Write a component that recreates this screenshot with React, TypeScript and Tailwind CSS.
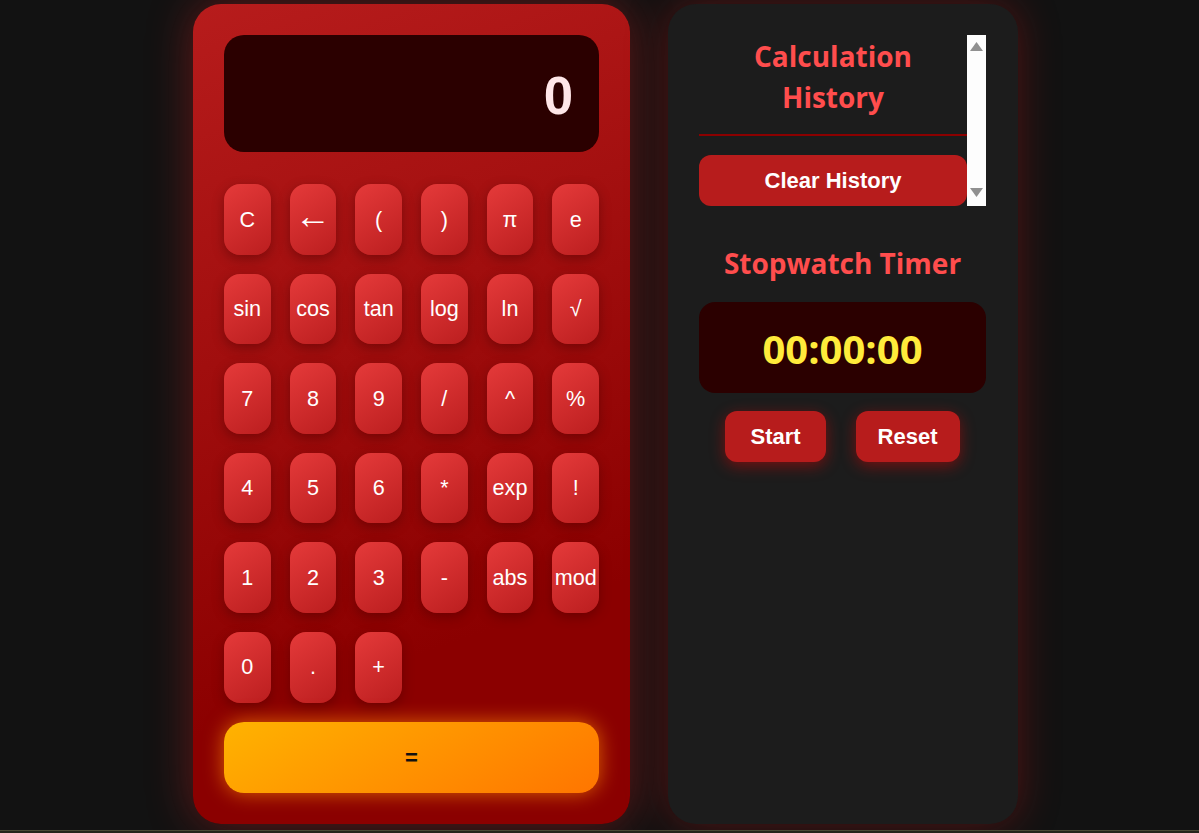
const keys = [
  "C", "←", "(", ")", "π", "e",
  "sin", "cos", "tan", "log", "ln", "√",
  "7", "8", "9", "/", "^", "%",
  "4", "5", "6", "*", "exp", "!",
  "1", "2", "3", "-", "abs", "mod",
  "0", ".", "+",
];

const sans = "font-['Liberation_Sans',Arial,sans-serif]";
const heading = "font-['Open_Sans','Noto_Sans',sans-serif]";

function ScrollBar() {
  return (
    <div className="w-[19px] bg-[#fdfdfd] flex flex-col justify-between items-center pt-[7px] pb-[9px]">
      <svg width="13" height="9" viewBox="0 0 13 9">
        <path d="M6.5 0 L13 9 L0 9 Z" fill="#909090" />
      </svg>
      <svg width="13" height="9" viewBox="0 0 13 9">
        <path d="M0 0 L13 0 L6.5 9 Z" fill="#909090" />
      </svg>
    </div>
  );
}

function Calculator() {
  return (
    <div className="w-[437px] h-[820px] rounded-[28px] p-[31px] flex flex-col bg-[linear-gradient(160deg,#b71c1c,#8b0000_75%)] shadow-[0_0_45px_rgba(200,30,30,0.45)]">
      {/* Display */}
      <div className="h-[117px] rounded-[20px] bg-[#2b0000] flex items-center justify-end pr-[26px] pt-[6px]">
        <span className={`${sans} text-[52.8px] font-bold text-[#ffe6e8] leading-none`}>0</span>
      </div>

      {/* Keys */}
      <div className="grid grid-cols-6 gap-[19px] mt-[32px]">
        {keys.map((k, index) => (
          <button
            key={index}
            className={`${sans} ${k === "←" ? "text-[36px] pb-[7px]" : "text-[21.6px]"} h-[70.6px] rounded-[16px] text-white bg-[linear-gradient(145deg,#e53a3a,#bb1e1f)] shadow-[0_4px_12px_rgba(60,0,0,0.4)] flex items-center justify-center leading-none`}
          >
            {k}
          </button>
        ))}
      </div>

      <button
        className={`${sans} mt-[19px] h-[71px] rounded-[20px] text-[22px] font-bold text-[#111] bg-[linear-gradient(150deg,#ffb300,#ff7500)] shadow-[0_0_20px_rgba(255,140,0,0.7)]`}
      >
        =
      </button>
    </div>
  );
}

function SidePanel() {
  return (
    <div className="w-[350px] h-[820px] rounded-[28px] pt-[31px] pl-[31px] pr-[32px] bg-[#1c1c1c] shadow-[0_0_40px_rgba(200,20,20,0.35)] flex flex-col">
      {/* History */}
      <div className="h-[171px] flex">
        <div className="flex-1 flex flex-col">
          <h2 className={`${heading} text-[28px] leading-[41px] font-bold text-[#ff4d4d] text-center pt-[1px]`}>
            Calculation
            <br />
            History
          </h2>
          <div className="h-[2px] bg-[#8b0000] mt-[16px]" />
          <button className={`${sans} mt-[19px] h-[51px] rounded-[12px] bg-[#b71c1c] text-white font-bold text-[22px]`}>
            Clear History
          </button>
        </div>
        <ScrollBar />
      </div>

      {/* Stopwatch */}
      <h2 className={`${heading} mt-[37px] text-[28px] leading-[41px] font-bold text-[#ff4d4d] text-center`}>
        Stopwatch Timer
      </h2>
      <div className="mt-[18px] h-[91px] rounded-[16px] bg-[#2b0000] flex items-center justify-center pt-[2px]">
        <span className={`${heading} text-[40px] font-bold text-[#ffeb3b] leading-none`}>00:00:00</span>
      </div>
      <div className="mt-[18px] flex justify-center gap-[30px]">
        <button className={`${sans} h-[51px] px-[25px] rounded-[12px] bg-[#b71c1c] text-white font-bold text-[22px] shadow-[0_4px_15px_rgba(255,0,0,0.4)]`}>
          Start
        </button>
        <button className={`${sans} h-[51px] px-[22px] rounded-[12px] bg-[#b71c1c] text-white font-bold text-[22px] shadow-[0_4px_15px_rgba(255,0,0,0.4)]`}>
          Reset
        </button>
      </div>
    </div>
  );
}

export default function App() {
  return (
    <div className="h-[833px] bg-[#121212] overflow-hidden flex flex-col">
      <div className="flex gap-[38px] pl-[193px] pt-[4px]">
        <Calculator />
        <SidePanel />
      </div>
      <div className="mt-[6px] h-[1px] bg-[#4a4a36]" />
      <div className="flex-1 bg-[#25251b]" />
    </div>
  );
}
